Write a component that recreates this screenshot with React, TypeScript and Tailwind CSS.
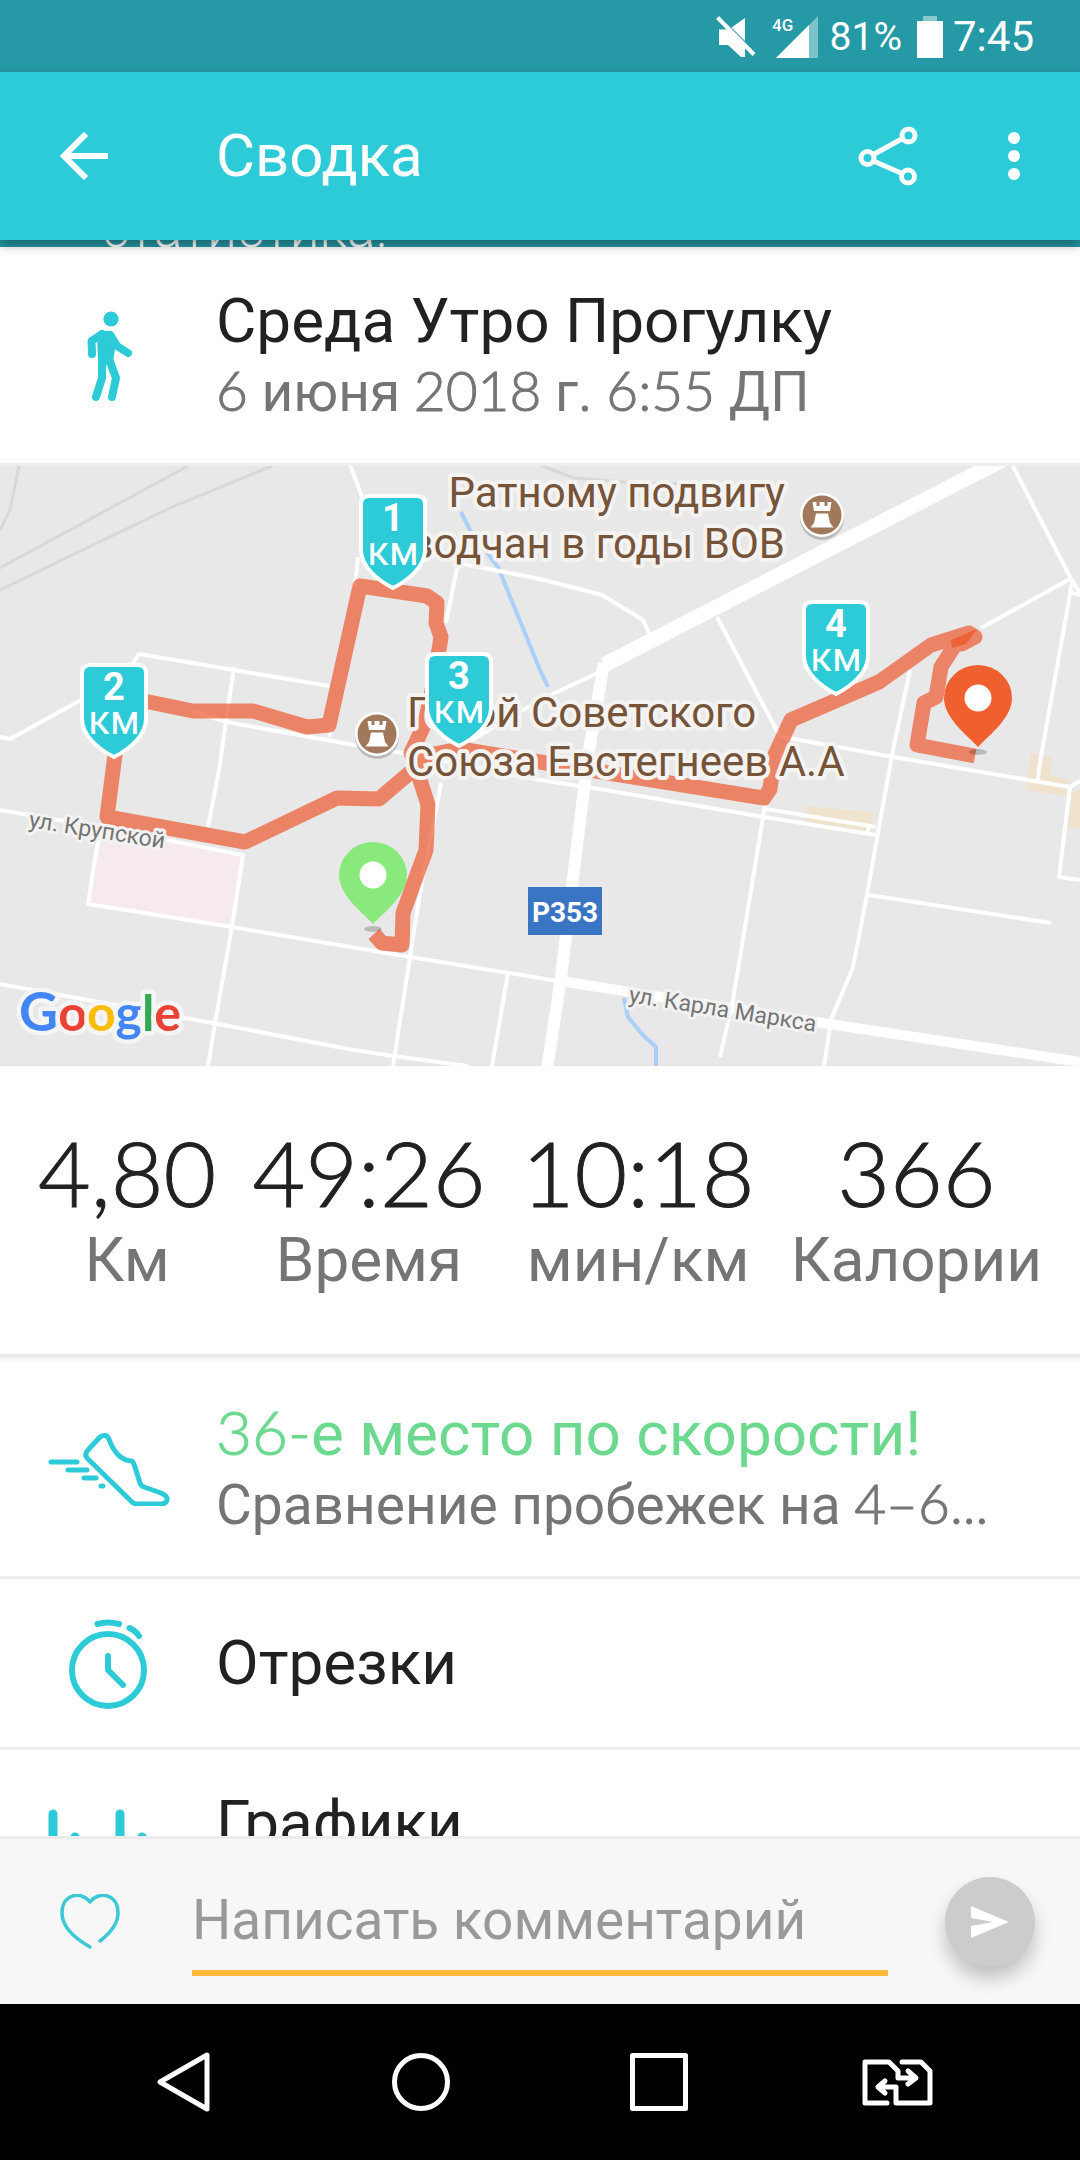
import React from "react";

/** Sets digits (with their punctuation) in the numeral face. */
function Mixed({ text }: { text: string }) {
  return (
    <>
      {text.split(/([\d–:,-][\d–:,.-]*)/).map((part, i) =>
        i % 2 ? (
          <span key={i} className="font-[Lato] font-light [-webkit-text-stroke:1px]">
            {part}
          </span>
        ) : (
          part
        ),
      )}
    </>
  );
}

function StatusBar() {
  return (
    <div className="flex h-[72px] shrink-0 items-center justify-end bg-[#2599a6] pt-0.5 pr-[46px] text-white">
      <svg width="40" height="42" viewBox="0 0 40 42" className="mr-4" aria-label="Без звука">
        <path d="M3 13.500l9 0 17 17v10.500l-4 0-13-12H3z" fill="#fff" />
        <path d="M15.500 11.500L29 2v23z" fill="#fff" />
        <path d="M1.500 1.500L38 38.500" stroke="#fff" strokeWidth="4" />
      </svg>
      <svg width="46" height="42" viewBox="0 0 46 42" className="mr-[12px]" aria-label="4G">
        <path d="M4 42L46 0v42z" fill="#fff" opacity=".4" />
        <path d="M4 42L37 9v33z" fill="#fff" />
        <text x="0" y="15" fill="#fff" fontFamily="Roboto" fontWeight="500" fontSize="17">
          4G
        </text>
      </svg>
      <span className="mr-[15px] text-[39px] leading-none">81%</span>
      <svg width="26" height="42" viewBox="0 0 26 42" className="mr-[10px]" aria-label="Батарея">
        <path d="M6 0h14v5h6v1H0V5h6z" fill="#fff" opacity=".45" />
        <path d="M0 5h26v37H0z" fill="#fff" />
      </svg>
      <span className="text-[42px] leading-none">7:45</span>
    </div>
  );
}

function AppBar() {
  return (
    <header className="relative z-10 flex h-[168px] shrink-0 items-center bg-[#2dcad7] pr-[54px] text-white shadow-[0_5px_10px_rgba(0,0,0,0.35)]">
      <button type="button" aria-label="Назад" className="flex w-[216px] pl-[60px]">
        <svg width="48" height="48" viewBox="0 0 48 48" fill="none" stroke="#fff" strokeWidth="6">
          <path d="M48 24H5M26 2L4 24l22 22" />
        </svg>
      </button>
      <h1 className="grow text-[60px] leading-[72px]">Сводка</h1>
      <button type="button" aria-label="Поделиться" className="mr-[84px]">
        <svg width="60" height="60" viewBox="0 0 60 60" fill="none" stroke="#fff" strokeWidth="5">
          <circle cx="9.500" cy="32" r="6.500" />
          <circle cx="50.500" cy="9.500" r="6.500" />
          <circle cx="50" cy="50.500" r="6.500" />
          <path d="M15.500 28.500L44.500 12.500M15.500 35L44 47.500" />
        </svg>
      </button>
      <button type="button" aria-label="Ещё">
        <svg width="24" height="48" viewBox="0 0 24 48" fill="#fff">
          <circle cx="12" cy="6" r="6" />
          <circle cx="12" cy="24" r="6" />
          <circle cx="12" cy="42" r="6" />
        </svg>
      </button>
    </header>
  );
}

const roads = [
  "M350 -2L362 31M358 91L355 120",
  "M0 271L10 273L81 234L133 197L139 188L234 204L329 220",
  "M234 201L219 304L208 361",
  "M193 246L227 256L360 280L420 290L540 314L593 322L764 351L876 369",
  "M332 261L329 271",
  "M446 157L458 97L540 113L602 129L643 154L652 174",
  "M604 204L540 234L470 275",
  "M1013 0L1070 111L1080 127M1070 113L981 162M1072 117L1039 302L1038 314M1072 127L1080 129",
  "M717 151L778 267M778 270L893 291L1070 321L1080 315",
  "M910 204L891 294L867 429L853 501L831 554L824 600",
  "M869 429L1051 457",
  "M1070 321L1059 411L1080 414",
  "M765 339L733 534L720 591",
  "M766 343L876 361M869 361L867 368",
  "M0 344L100 361L243 389L232 461L215 557L208 600",
  "M100 361L88 438L232 461L410 491L540 512L561 516",
  "M0 518L213 557L348 583L393 590L468 600",
  "M441 317L420 427L410 491L393 600",
  "M508 507L492 600",
];

const poi = {
  fill: "#75543a",
  stroke: "#f5f3f1",
  strokeWidth: 8,
  strokeLinejoin: "round" as const,
  paintOrder: "stroke",
  fontSize: 42,
};

const street = {
  fill: "#747474",
  stroke: "#f2f2f2",
  strokeWidth: 6,
  strokeLinejoin: "round" as const,
  paintOrder: "stroke",
  fontSize: 23,
};

function Landmark({ x, y }: { x: number; y: number }) {
  return (
    <g transform={`translate(${x} ${y})`}>
      <circle cy="3" r="22" fill="#999" opacity=".6" />
      <circle r="22" fill="#fff" />
      <circle r="19.500" fill="#a1785b" />
      <path
        d="M-9.500 -13h4v4h3v-4h5v4h3v-4h4l-1.500 9h-16zM-6 -1.500H6L8 8l3.500 4.500h-23L-8 8z"
        fill="#fff"
      />
    </g>
  );
}

function KmMarker({ x, y, n }: { x: number; y: number; n: number }) {
  return (
    <g transform={`translate(${x} ${y})`}>
      <path
        d="M-24 2H24Q32 2 32 10V56C32 72 16 86 0 94C-16 86 -32 72 -32 56V10Q-32 2 -24 2Z"
        fill="#2dcad7"
        stroke="#fff"
        strokeWidth="4"
      />
      <text y="37" textAnchor="middle" fill="#fff" fontWeight="700" fontSize="38">
        {n}
      </text>
      <text y="71" textAnchor="middle" fill="#fff" fontSize="40">
        км
      </text>
    </g>
  );
}

function Pin({ x, y, color }: { x: number; y: number; color: string }) {
  return (
    <g transform={`translate(${x} ${y})`}>
      <ellipse cy="5" rx="9" ry="3" fill="#000" opacity=".2" />
      <path
        d="M0 0C-12 -13 -34 -29 -34 -49A34 33 0 0 1 34 -49C34 -29 12 -13 0 0Z"
        fill={color}
      />
      <circle cy="-49" r="13.500" fill="#fff" />
    </g>
  );
}

function RouteMap() {
  return (
    <svg viewBox="0 0 1080 600" className="block h-auto w-full bg-[#e8e8e8]" fontFamily="Roboto" role="img" aria-label="Карта маршрута">
      <g fill="#efe3cd">
        <path d="M807 340L874 346L872 365L805 357Z" />
        <path d="M1031 287L1052 291L1050 309L1070 314L1067 330L1026 324Z" />
        <path d="M1072 327L1080 322V362H1068Z" />
      </g>
      <path d="M100 362L243 389L232 461L88 438Z" fill="#f6eaee" />
      <g fill="none" stroke="#d8d8d8" strokeWidth="3">
        <path d="M19 0L10 44L0 64M188 0L0 102M272 0L172 41L0 124" />
        <path d="M540 -1L574 12L623 16L678 18" />
      </g>
      <path d="M461 46L470 64L498 101L540 204L548 221M624 532L628 551L643 569L656 581V600" fill="none" stroke="#a9cffb" strokeWidth="4" />
      <g fill="none" stroke="#fff" strokeWidth="4" strokeLinejoin="round">
        {roads.map((d) => (
          <path key={d} d={d} />
        ))}
        <path d="M1010 -10L604 199" strokeWidth="15" />
        <path d="M604 197L588 290L561 511L546 610" strokeWidth="12" />
        <path d="M561 515L829 558L1080 596" strokeWidth="10" />
      </g>
      <g fill="none" stroke="#ec5f35" strokeWidth="15" strokeLinejoin="round" opacity=".73">
        <path d="M374 468L382 477L402 479L403 447L426 384L428 339L417 304L411 287L425 257L434 215L441 171L436 157L437 137L427 130L360 120L329 259L307 261L253 245H193L149 236L122 234L107 351L245 376L337 332L379 333L413 304L418 291L460 283L540 296L764 332L770 323L774 291L791 254L879 216L931 179L969 167L975 171L962 178L957 176L941 201L936 231L924 237L917 279L975 290" />
      </g>
      <path d="M951 174L977 163L966 178L952 182Z" fill="#ee6238" />

      <g {...poi}>
        <text x="785" y="41" textAnchor="end">Ратному подвигу</text>
        <text x="785" y="92" textAnchor="end">водчан в годы ВОВ</text>
        <text x="407" y="261">Герой Советского</text>
        <text x="407" y="310">Союза Евстегнеев А.А</text>
      </g>
      <Landmark x={822} y={49} />
      <Landmark x={377} y={268} />
      <text {...street} transform="translate(28 361) rotate(9)">ул. Крупской</text>
      <text {...street} transform="translate(628 536) rotate(9)">ул. Карла Маркса</text>
      <path d="M528 421H602V469H528Z" fill="#3a75c4" />
      <text x="565" y="456" textAnchor="middle" fill="#fff" fontWeight="700" fontSize="28">P353</text>

      <KmMarker x={393} y={28} n={1} />
      <KmMarker x={114} y={197} n={2} />
      <KmMarker x={459} y={186} n={3} />
      <KmMarker x={836} y={134} n={4} />
      <Pin x={373} y={458} color="#8ae97d" />
      <Pin x={978} y={281} color="#f0602f" />

      <text
        x="19"
        y="565"
        fontFamily="Lato"
        fontWeight="700"
        fontSize="50"
        stroke="#f5f5f5"
        strokeWidth="9"
        strokeLinejoin="round"
        paintOrder="stroke"
      >
        <tspan fill="#4285f4" fontSize="54">G</tspan>
        <tspan fill="#ea4335">o</tspan>
        <tspan fill="#fbbc05">o</tspan>
        <tspan fill="#4285f4">g</tspan>
        <tspan fill="#34a853">l</tspan>
        <tspan fill="#ea4335">e</tspan>
      </text>
    </svg>
  );
}

const stats = [
  { value: "4,80", label: "Км" },
  { value: "49:26", label: "Время" },
  { value: "10:18", label: "мин/км" },
  { value: "366", label: "Калории" },
];

function WalkIcon() {
  return (
    <svg width="48" height="93" viewBox="0 0 48 93" fill="none" stroke="#2dcad7" strokeWidth="8" strokeLinecap="round" strokeLinejoin="round">
      <circle cx="27" cy="10" r="7.600" fill="#2dcad7" stroke="none" />
      <path d="M18 25L7.500 32L8 45M27 27L33 37L44 44M18 52V69L12 88M25 50L32 69L28 88" />
      <path d="M17 26H26L27 40L25 52H18Z" fill="#2dcad7" />
    </svg>
  );
}

function ShoeIcon() {
  return (
    <svg width="124" height="78" viewBox="2 -3 124 78" fill="none" stroke="#2dcad7" strokeWidth="5" strokeLinecap="round" strokeLinejoin="round">
      <path d="M56 6Q62 2 65 8C69 20 77 30 88 30Q90 32 91 36L96 52Q97 55 100 56L117 62Q124 65 123 69Q122 73 117 73H93Q90 73 88 71L43 27Q40 23 44 19Z" />
      <path d="M7 31H33M24 39H43M40 47H52M57 55H59" />
    </svg>
  );
}

function StopwatchIcon() {
  return (
    <svg width="80" height="92" viewBox="0 0 80 92" fill="none" stroke="#2dcad7" strokeWidth="6" strokeLinecap="round" strokeLinejoin="round">
      <circle cx="40" cy="53" r="36" />
      <path d="M29.500 7Q40 4 51 7M61.500 11Q68 14 71 19M40 39V53L55 68" />
    </svg>
  );
}

function ChartIcon() {
  return (
    <svg width="124" height="90" viewBox="0 0 124 90" fill="none" stroke="#2dcad7" strokeWidth="9" strokeLinecap="round">
      <path d="M8 6V84M75 6V84M30 29V84M97 29V84" />
    </svg>
  );
}

function Row({ icon, title, sub, accent }: { icon: React.ReactNode; title: string; sub?: string; accent?: boolean }) {
  return (
    <>
      <span className="flex w-[216px] shrink-0 justify-center">{icon}</span>
      <span className="min-w-0 grow pr-[60px] text-left">
        <span className={accent ? "block truncate text-[62px] leading-[72px] text-[#6cd98f]" : "block truncate text-[62px] leading-[72px] text-[#212121]"}>
          <Mixed text={title} />
        </span>
        {sub && (
          <span className="block truncate text-[55px] leading-[66px] text-[#757575]">
            <Mixed text={sub} />
          </span>
        )}
      </span>
    </>
  );
}

export default function App() {
  return (
    <div className="flex h-screen flex-col overflow-hidden bg-white font-[Roboto,sans-serif]">
      <StatusBar />
      <AppBar />

      <main className="flex min-h-0 grow flex-col overflow-hidden">
        <div className="flex h-[7px] shrink-0 items-end overflow-hidden bg-[#2599a6] pl-[102px]">
          <p className="text-[53px] leading-[36px] font-light text-white">статистика!</p>
        </div>

        <section className="flex h-[219px] shrink-0 items-center border-b-3 border-[#eeeeee]">
          <Row icon={<WalkIcon />} title="Среда Утро Прогулку" sub="6 июня 2018 г. 6:55 ДП" />
        </section>

        <div className="shrink-0">
          <RouteMap />
        </div>

        <section className="shrink-0 border-b-3 border-[#eaeaea] px-[38px] pt-[56px] pb-[56px] shadow-[0_2px_5px_rgba(0,0,0,0.08)]">
          <dl className="flex justify-between">
            {stats.map((s) => (
              <div key={s.label} className="flex flex-col-reverse items-center">
                <dt className="text-[62px] leading-[76px] text-[#757575]">{s.label}</dt>
                <dd className="font-[Lato] text-[91px] leading-[100px] font-light text-[#212121] [-webkit-text-stroke:1px]">{s.value}</dd>
              </div>
            ))}
          </dl>
        </section>

        <button type="button" className="flex h-[222px] shrink-0 items-center border-b-3 border-[#eeeeee]">
          <Row icon={<ShoeIcon />} title="36-е место по скорости!" sub="Сравнение пробежек на 4–6..." accent />
        </button>
        <button type="button" className="flex h-[171px] shrink-0 items-center border-b-3 border-[#eeeeee]">
          <Row icon={<StopwatchIcon />} title="Отрезки" />
        </button>
        <button type="button" className="flex h-[219px] shrink-0 items-start pt-[37px]">
          <span className="flex w-[216px] shrink-0 pt-[21px] pl-[45px]">
            <ChartIcon />
          </span>
          <span className="text-[62px] leading-[72px] text-[#212121]">Графики</span>
        </button>
      </main>

      <form className="flex h-[168px] shrink-0 items-center border-t-3 border-[#ececec] bg-[#f7f7f7] pr-[45px]" onSubmit={(e) => e.preventDefault()}>
        <button type="button" aria-label="Нравится" className="flex w-[192px] shrink-0 pl-[60px]">
          <svg width="60" height="56" viewBox="0 0 60 56" fill="none" stroke="#3cc8d4" strokeWidth="3.500" strokeLinecap="round" strokeLinejoin="round">
            <path d="M30 53C16 45 2 34 2 19C2 -1 22 -3 30 8C38 -3 58 -1 58 19C58 30 49 40 40 47" />
          </svg>
        </button>
        <input
          type="text"
          aria-label="Комментарий"
          placeholder="Написать комментарий"
          className="h-[109px] min-w-0 grow border-b-6 border-[#fcb83b] bg-transparent pt-0.5 text-[55px] text-[#212121] outline-none placeholder:text-[#999999]"
        />
        <button
          type="submit"
          aria-label="Отправить"
          className="ml-[57px] flex size-[90px] shrink-0 items-center justify-center rounded-full bg-[#cccccc] shadow-[0_12px_18px_rgba(0,0,0,0.22)]"
        >
          <svg width="38" height="32" viewBox="0 0 38 32" fill="#fff">
            <path d="M0 0L38 16L0 32V20L22 16L0 12Z" />
          </svg>
        </button>
      </form>

      <nav className="grid h-[156px] shrink-0 grid-cols-4 items-center justify-items-center bg-black px-16">
        <button type="button" aria-label="Назад">
          <svg width="60" height="60" viewBox="0 0 60 60" fill="none" stroke="#fff" strokeWidth="5" strokeLinejoin="round">
            <path d="M7 30L54 3V57Z" />
          </svg>
        </button>
        <button type="button" aria-label="Домой">
          <svg width="60" height="60" viewBox="0 0 60 60" fill="none" stroke="#fff" strokeWidth="5">
            <circle cx="30" cy="30" r="26.500" />
          </svg>
        </button>
        <button type="button" aria-label="Обзор">
          <svg width="60" height="60" viewBox="0 0 60 60" fill="none" stroke="#fff" strokeWidth="5" strokeLinejoin="round">
            <path d="M3.500 3.500H56.500V56.500H3.500Z" />
          </svg>
        </button>
        <button type="button" aria-label="Сменить SIM-карту">
          <svg width="72" height="48" viewBox="0 0 72 48" fill="none" stroke="#fff" strokeWidth="5" strokeLinecap="round" strokeLinejoin="round">
            <path d="M26 45H4V4H28L37 13V20H54M47 13L55 20L47 26" />
            <path d="M41 4H60L69 13V45H35V29H19M24 23L17 29L24 35" />
          </svg>
        </button>
      </nav>
    </div>
  );
}
